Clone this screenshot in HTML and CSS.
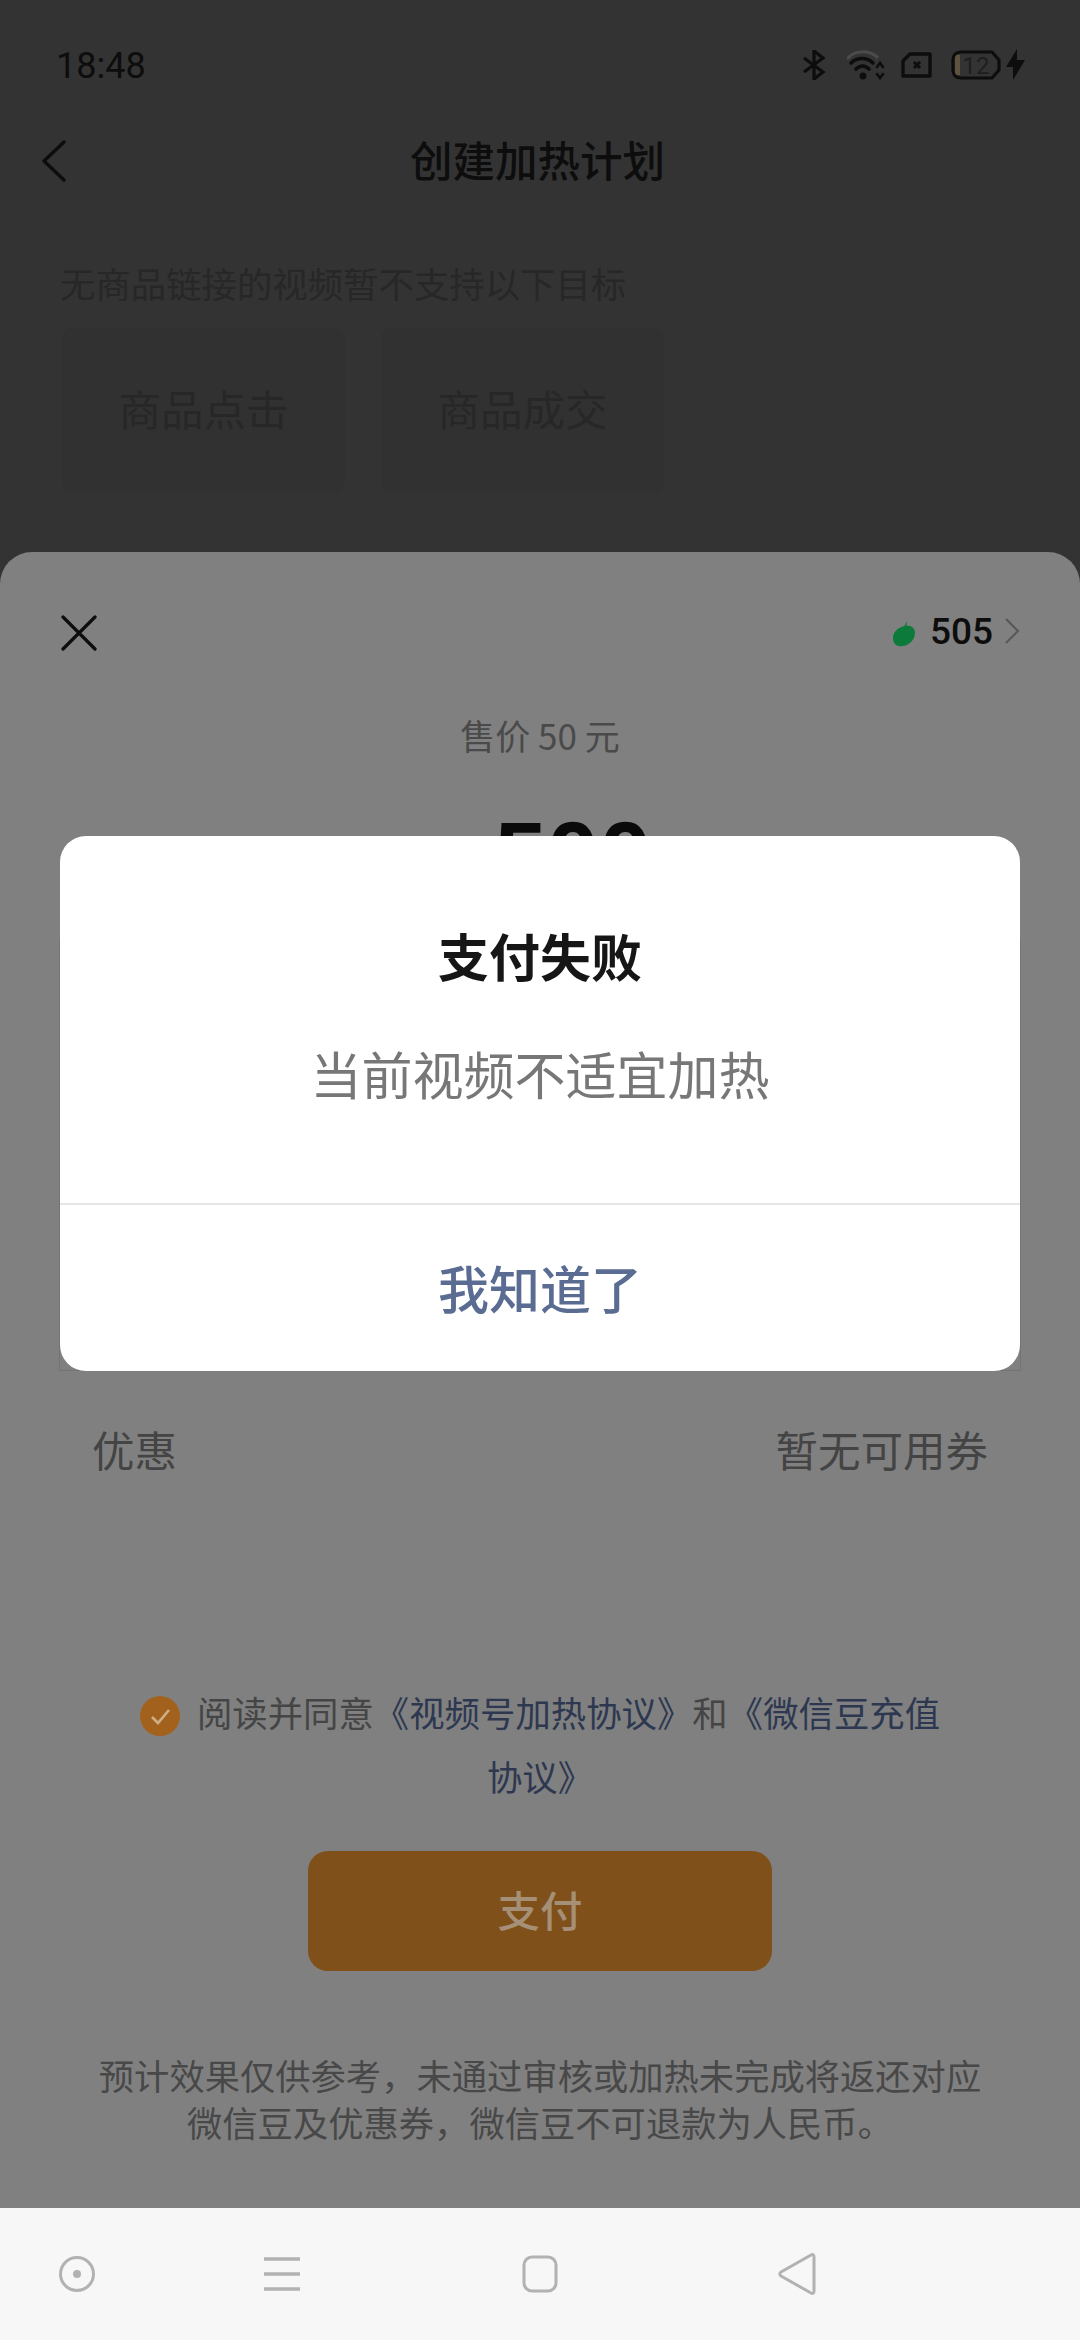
FILE: index.html
```html
<!DOCTYPE html>
<html lang="zh-CN">
<head>
<meta charset="utf-8">
<title>创建加热计划</title>
<link rel="stylesheet" href="styles.css">
</head>
<body>
<div class="screen">
  <section class="page">
    <div class="status">
      <span class="time">18:48</span>
      <div class="status-icons">
        <svg class="ic-bt" width="24" height="30" viewBox="0 0 24 30" fill="none" stroke="#0d0d0d" stroke-width="3.2"><path d="M2 8 21 22 12 29V1L21 8 2 22"/></svg>
        <svg class="ic-wifi" width="39" height="30" viewBox="0 0 39 30" fill="none" stroke-linecap="round">
          <path d="M1 8C8 0 22 0 30 7" stroke="#4c4c4c" stroke-width="3"/>
          <path d="M4 13C10 7 20 7 26 13" stroke="#0d0d0d" stroke-width="3.6"/>
          <path d="M9 19C13 15 18 15 22 19" stroke="#0d0d0d" stroke-width="3.6"/>
          <circle cx="16" cy="26" r="3.4" fill="#0d0d0d"/>
          <path d="M30 17 33 13 36 17M30 24 33 28 36 24" stroke="#0d0d0d" stroke-width="2.6"/>
        </svg>
        <svg class="ic-sim" width="31" height="26" viewBox="0 0 31 26" fill="none"><path d="M9 2H29V24H2V9Z" stroke="#0d0d0d" stroke-width="3.4" stroke-linejoin="round"/><path d="M13 10 19 16M19 10 13 16" stroke="#0d0d0d" stroke-width="3"/></svg>
        <svg class="ic-bat" width="50" height="30" viewBox="0 0 50 30" fill="none">
          <path d="M4 5H9V25H4Z" fill="#5d533f"/>
          <path d="M10 2H41L48 10V20L41 28H10C5 28 2 25 2 20V10C2 5 5 2 10 2Z" stroke="#0d0d0d" stroke-width="3.2" stroke-linejoin="round"/>
          <text class="bat-text" x="25" y="24" text-anchor="middle">12</text>
        </svg>
        <svg class="ic-bolt" width="21" height="31" viewBox="0 0 21 31"><path d="M12 0 1 18H8L8 31 20 11H12Z" fill="#0d0d0d"/></svg>
      </div>
    </div>
    <header class="titlebar">
      <svg class="back" width="26" height="42" viewBox="0 0 26 42" fill="none"><path d="M23 2 3 21 23 40" stroke="#0d0d0d" stroke-width="3.4" stroke-linecap="round" stroke-linejoin="round"/></svg>
      <h1 class="title">创建加热计划</h1>
    </header>
    <p class="hint">无商品链接的视频暂不支持以下目标</p>
    <div class="targets">
      <div class="target">商品点击</div>
      <div class="target">商品成交</div>
    </div>
  </section>

  <section class="sheet">
    <div class="sheet-head">
      <svg width="36" height="36" viewBox="0 0 36 36" fill="none"><path d="M2 2 34 34M34 2 2 34" stroke="#0d0d0d" stroke-width="3.2" stroke-linecap="round"/></svg>
      <div class="balance">
        <svg class="leaf" width="24" height="26" viewBox="0 0 24 26"><path d="M14 0C15 2 15 3.500 14.500 5 19 4 23 7 23 12 23 18 18 24 11 25 5 26 1 23 1 17 1 11 6 6.500 11 5.500 13 5 14 3 14 0Z" fill="#0b7a3a"/></svg>
        <span class="beans">505</span>
        <svg class="more" width="16" height="28" viewBox="0 0 16 28" fill="none"><path d="M2 2 14 14 2 26" stroke="#585858" stroke-width="2.2"/></svg>
      </div>
    </div>
    <p class="price">售价 50 元</p>
    <p class="amount">500</p>
    <div class="pay-box"></div>
    <div class="discount">
      <span>优惠</span>
      <span>暂无可用券</span>
    </div>
    <p class="agree">
      <svg class="check" width="40" height="40" viewBox="0 0 40 40"><circle cx="20" cy="20" r="20" fill="#a2621e"/><path d="M12 21 18 27 29 14" fill="none" stroke="#cfae86" stroke-width="2.6"/></svg>阅读并同意<a class="link">《视频号加热协议》</a>和<a class="link">《微信豆充值协议》</a>
    </p>
    <button class="pay">支付</button>
    <p class="note">预计效果仅供参考&#65292;未通过审核或加热未完成将返还对应<br>微信豆及优惠券&#65292;微信豆不可退款为人民币。</p>
  </section>

  <nav class="navbar">
    <svg class="nav-home" width="36" height="38" viewBox="0 0 36 38" fill="none"><circle cx="18" cy="19" r="16.5" stroke="#b2b2b2" stroke-width="3"/><circle cx="18" cy="19" r="4" fill="#b2b2b2"/></svg>
    <svg class="nav-menu" width="36" height="36" viewBox="0 0 36 36"><path d="M0 3H36M0 18H36M0 33H36" stroke="#b2b2b2" stroke-width="3.4"/></svg>
    <svg class="nav-square" width="36" height="38" viewBox="0 0 36 38" fill="none"><rect x="2" y="2" width="32" height="34" rx="8" stroke="#b2b2b2" stroke-width="3"/></svg>
    <svg class="nav-back" width="38" height="42" viewBox="0 0 38 42" fill="none"><path d="M33 2 3 19C1.500 20 1.500 22 3 23L33 40C35 41 36 40 36 38V4C36 2 35 1 33 2Z" stroke="#b2b2b2" stroke-width="3" stroke-linejoin="round"/></svg>
  </nav>

  <div class="dialog">
    <div class="dialog-body">
      <h2 class="dialog-title">支付失败</h2>
      <p class="dialog-text">当前视频不适宜加热</p>
    </div>
    <div class="dialog-action">我知道了</div>
  </div>
</div>
</body>
</html>
```

FILE: styles.css
```css
* { box-sizing: border-box; }

html, body { margin: 0; padding: 0; }

body {
  font-family: "Noto Sans CJK SC", "Noto Sans", Roboto, sans-serif;
  background: #333;
}

p, h1, h2 { margin: 0; font-weight: 400; }

.screen {
  position: relative;
  width: 1080px;
  height: 2340px;
  display: flex;
  flex-direction: column;
  overflow: hidden;
}

/* dimmed page behind the sheet */
.page {
  height: 552px;
  flex: none;
  background: #333;
}

.status {
  height: 96px;
  padding: 46px 54px 10px 56px;
  display: flex;
  align-items: center;
  justify-content: space-between;
}

.time {
  font-family: Roboto, sans-serif;
  font-size: 36px;
  line-height: 42px;
  color: #0d0d0d;
}

.status-icons { display: flex; align-items: center; margin-top: -3px; }
.ic-wifi { margin-left: 21px; }
.ic-sim { margin-left: 15px; }
.ic-bat { margin-left: 19px; }
.ic-bolt { margin-left: 4px; }

.bat-text {
  font-family: Roboto, sans-serif;
  font-size: 24px;
  fill: #1e1e1e;
}

.titlebar {
  height: 130px;
  padding-left: 41px;
  display: flex;
  align-items: center;
}

.back { flex: none; }

.title {
  margin: -5px 0 0 343px;
  font-size: 42.5px;
  line-height: 60px;
  font-weight: 500;
  white-space: nowrap;
  color: #0d0d0d;
}

.hint {
  margin: 33px 0 0 60px;
  font-size: 35.4px;
  line-height: 48px;
  color: #272727;
}

.targets {
  margin: 21px 0 0 62px;
  display: flex;
  gap: 36px;
}

.target {
  width: 283px;
  height: 164px;
  padding-bottom: 5px;
  border-radius: 10px;
  background: #313131;
  display: flex;
  align-items: center;
  justify-content: center;
  font-size: 42.5px;
  color: #272727;
}

/* payment sheet */
.sheet {
  height: 1656px;
  flex: none;
  padding-top: 51px;
  background: #808080;
  border-radius: 32px 32px 0 0;
}

.sheet-head {
  height: 60px;
  padding: 0 61px;
  display: flex;
  align-items: center;
  justify-content: space-between;
}

.balance { display: flex; align-items: center; }

.leaf { margin-top: 2px; }

.beans {
  margin-left: 14px;
  font-family: Roboto, sans-serif;
  font-size: 37px;
  font-weight: 500;
  line-height: 44px;
  margin-top: -3px;
  color: #0d0d0d;
}

.more { margin-left: 11px; margin-right: -1px; margin-top: -4px; }

.price {
  margin-top: 48px;
  font-size: 35px;
  line-height: 48px;
  text-align: center;
  color: #4a4a4a;
}

.amount {
  margin-top: 47px;
  padding-left: 66px;
  font-family: "Liberation Sans", Arial, sans-serif;
  font-size: 94px;
  line-height: 100px;
  font-weight: 700;
  text-align: center;
  color: #0a0a0a;
}

.pay-box {
  height: 431px;
  margin: 34px 59px 0;
  border: 1px solid #747474;
}

.discount {
  margin-top: 48px;
  padding: 0 92px;
  display: flex;
  justify-content: space-between;
  font-size: 42.5px;
  line-height: 60px;
  color: #444;
}

.agree {
  width: 826px;
  margin: 201px auto 0;
  font-size: 35.4px;
  line-height: 64px;
  text-align: center;
  color: #454545;
}

.check {
  margin-right: 17px;
  vertical-align: -9px;
}

.link { color: #2d3850; }

.pay {
  display: block;
  width: 464px;
  height: 120px;
  margin: 43px auto 0;
  padding: 0 0 6px;
  border: 0;
  border-radius: 20px;
  background: #7f5019;
  font: 500 42.5px "Noto Sans CJK SC", sans-serif;
  color: #a58f76;
}

.note {
  margin-top: 80px;
  font-size: 35.3px;
  line-height: 47px;
  text-align: center;
  color: #484848;
}

/* system nav */
.navbar {
  flex: 1;
  padding-left: 59px;
  background: #f7f7f7;
  display: flex;
  align-items: center;
}

.nav-menu { margin-left: 169px; }
.nav-square { margin-left: 222px; }
.nav-back { margin-left: 220px; }

/* dialog over everything */
.dialog {
  position: absolute;
  left: 60px;
  top: 836px;
  width: 960px;
  height: 535px;
  border-radius: 26px;
  background: #fff;
  display: flex;
  flex-direction: column;
  overflow: hidden;
}

.dialog-body {
  height: 369px;
  flex: none;
  padding-top: 84px;
  border-bottom: 2px solid #e6e6e6;
  text-align: center;
}

.dialog-title {
  font-size: 51px;
  line-height: 70px;
  font-weight: 700;
  color: #161616;
}

.dialog-text {
  margin-top: 48px;
  font-size: 51px;
  line-height: 70px;
  color: #777;
}

.dialog-action {
  flex: 1;
  padding-bottom: 2px;
  display: flex;
  align-items: center;
  justify-content: center;
  font-size: 51px;
  font-weight: 500;
  color: #5a6c92;
}
```
